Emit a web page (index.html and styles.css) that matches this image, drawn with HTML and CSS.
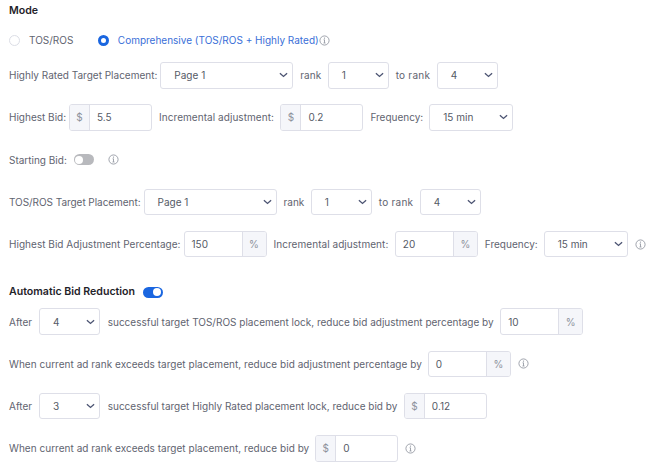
FILE: index.html
```html
<!DOCTYPE html>
<html lang="en">
<head>
<meta charset="utf-8">
<title>Mode</title>
<link rel="stylesheet" href="styles.css">
</head>
<body>
<svg class="defs" width="0" height="0" aria-hidden="true">
  <symbol id="chev" viewBox="0 0 10 6"><path d="M1 1l4 3.6L9 1" fill="none" stroke="#4d5573" stroke-width="1.5"/></symbol>
  <symbol id="info" viewBox="0 0 12 12"><circle cx="6" cy="6" r="5" fill="none" stroke="#8d929c" stroke-width=".9"/><path d="M6 5.2v3.4M4.9 8.7h2.2M5 5.2h1" fill="none" stroke="#8d929c" stroke-width=".9"/><circle cx="6" cy="3.4" r=".7" fill="#8d929c"/></symbol>
</svg>
<main class="page">
  <h2 class="title mode">Mode</h2>
  <div class="radios">
    <span class="radio"></span><span class="radio-label">TOS/ROS</span>
    <span class="radio on"></span><span class="radio-label active">Comprehensive (TOS/ROS + Highly Rated)</span><svg class="info tight"><use href="#info"/></svg>
  </div>

  <div class="row first">
    <span>Highly Rated Target Placement:</span>
    <div class="select w133"><span>Page 1</span><svg class="chev"><use href="#chev"/></svg></div>
    <span class="lbl">rank</span>
    <div class="select w61"><span>1</span><svg class="chev"><use href="#chev"/></svg></div>
    <span class="lbl to">to rank</span>
    <div class="select w61"><span>4</span><svg class="chev"><use href="#chev"/></svg></div>
  </div>

  <div class="row">
    <span>Highest Bid:</span>
    <div class="group"><span class="addon pre">$</span><span class="val">5.5</span></div>
    <span class="lbl sp">Incremental adjustment:</span>
    <div class="group"><span class="addon pre">$</span><span class="val">0.2</span></div>
    <span class="lbl freq">Frequency:</span>
    <div class="select w84"><span>15 min</span><svg class="chev"><use href="#chev"/></svg></div>
  </div>

  <div class="row">
    <span>Starting Bid:</span>
    <span class="toggle off"></span>
    <svg class="info wide"><use href="#info"/></svg>
  </div>

  <div class="row">
    <span class="narrow">TOS/ROS Target Placement:</span>
    <div class="select w133"><span>Page 1</span><svg class="chev"><use href="#chev"/></svg></div>
    <span class="lbl">rank</span>
    <div class="select w61"><span>1</span><svg class="chev"><use href="#chev"/></svg></div>
    <span class="lbl to">to rank</span>
    <div class="select w61"><span>4</span><svg class="chev"><use href="#chev"/></svg></div>
  </div>

  <div class="row">
    <span class="sp-sm">Highest Bid Adjustment Percentage:</span>
    <div class="group"><span class="val">150</span><span class="addon post">%</span></div>
    <span class="lbl sp">Incremental adjustment:</span>
    <div class="group"><span class="val">20</span><span class="addon post">%</span></div>
    <span class="lbl freq">Frequency:</span>
    <div class="select w84"><span>15 min</span><svg class="chev"><use href="#chev"/></svg></div>
    <svg class="info after"><use href="#info"/></svg>
  </div>

  <div class="auto">
    <h2 class="title">Automatic Bid Reduction</h2>
    <span class="toggle"></span>
  </div>

  <div class="row tight-top">
    <span class="word">After</span>
    <div class="select w61"><span>4</span><svg class="chev"><use href="#chev"/></svg></div>
    <span class="lbl long">successful target TOS/ROS placement lock, reduce bid adjustment percentage by</span>
    <div class="group"><span class="val">10</span><span class="addon post">%</span></div>
  </div>

  <div class="row">
    <span class="sp-sm gapped">When current ad rank exceeds target placement, reduce bid adjustment percentage by</span>
    <div class="group"><span class="val">0</span><span class="addon post">%</span></div>
    <svg class="info after"><use href="#info"/></svg>
  </div>

  <div class="row">
    <span class="word">After</span>
    <div class="select w61"><span>3</span><svg class="chev"><use href="#chev"/></svg></div>
    <span class="lbl long">successful target Highly Rated placement lock, reduce bid by</span>
    <div class="group"><span class="addon pre">$</span><span class="val">0.12</span></div>
  </div>

  <div class="row">
    <span class="sp-sm gapped">When current ad rank exceeds target placement, reduce bid by</span>
    <div class="group"><span class="addon pre">$</span><span class="val">0</span></div>
    <svg class="info after"><use href="#info"/></svg>
  </div>
</main>
</body>
</html>
```

FILE: styles.css
```css
* { box-sizing: border-box; }
html, body { margin: 0; padding: 0; background: #fff; overflow: hidden; }
body { width: 654px; height: 462px; font-family: Inter, "Liberation Sans", sans-serif; font-size: 10px; color: #5f6470; }
.defs { position: absolute; }
.page { padding: 0 0 0 9px; }
.title { margin: 0; font-size: 10.6px; font-weight: 600; color: #1f2329; line-height: 18px; }
.mode { padding-top: 2px; height: 19px; }
.radios { display: flex; align-items: center; height: 18px; margin-top: 12px; }
.radio { width: 11px; height: 11px; border-radius: 50%; border: 1px solid #dcdee6; background: #fff; flex: none; }
.radio.on { border: 3.5px solid #1a66e0; margin-left: 24.5px; }
.radio-label { margin-left: 9px; }
.radio-label.active { color: #3a6fd8; }
.row { display: flex; align-items: center; height: 26.6px; margin-top: 15.6px; white-space: nowrap; }
.row.first { margin-top: 13px; }
.row.tight-top { margin-top: 7px; }
.lbl { margin-left: 7px; }
.lbl.long { margin-left: 7.7px; }
.lbl.to { letter-spacing: .25px; }
.sp { letter-spacing: .05px; }
.sp-sm { letter-spacing: .03px; }
.narrow { letter-spacing: -.05px; }
.word { margin-right: 4px; }
.gapped { margin-right: 3px; }
.select, .group { display: flex; align-items: center; height: 100%; border: 1px solid #dedfe8; border-radius: 3px; background: #fff; margin-left: 3px; flex: none; }
.lbl + .select, .lbl + .group { margin-left: 6.5px; }
.lbl.freq + .select { margin-left: 6px; }
.select { padding: 0 4px 0 13px; justify-content: space-between; color: #555a66; }
.w133 { width: 133px; }
.w61 { width: 61px; }
.w84 { width: 84px; }
.chev { width: 9px; height: 6px; }
.group { width: 83px; overflow: hidden; }
.addon { display: flex; align-items: center; justify-content: center; height: 100%; background: #f5f6fa; color: #8d929c; flex: none; }
.addon.pre { width: 20px; border-right: 1px solid #dedfe8; }
.addon.post { width: 24px; border-left: 1px solid #dedfe8; }
.val { flex: 1; padding-left: 7px; color: #555a66; }
.toggle { display: inline-block; position: relative; width: 20px; height: 11px; border-radius: 6px; background: #1a66e0; margin-left: 7px; flex: none; }
.title + .toggle { margin-left: 7.5px; }
.toggle::after { content: ""; position: absolute; top: 1.5px; right: 1.5px; width: 8px; height: 8px; border-radius: 50%; background: #fff; }
.toggle.off { background: #b8b9bd; }
.toggle.off::after { right: auto; left: 1.5px; }
.info { width: 11px; height: 11px; flex: none; }
.info.tight { margin-left: 0; }
.info.wide { margin-left: 14px; }
.info.after { margin-left: 7px; }
.auto { display: flex; align-items: center; height: 18px; margin-top: 26px; }
```
